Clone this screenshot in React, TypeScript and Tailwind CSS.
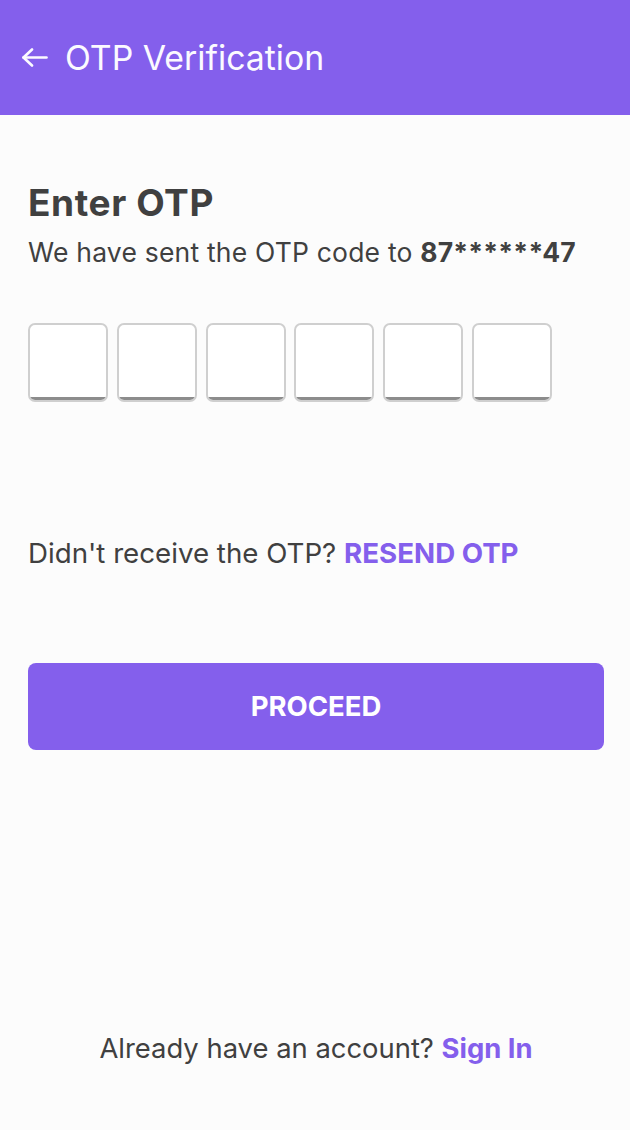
import React from "react";

export default function App() {
  const boxes = [0, 1, 2, 3, 4, 5];
  return (
    <div className="min-h-[1130px] w-[630px] bg-[#fcfcfc] flex flex-col">
      <header className="h-[115px] bg-[#845fec] flex items-center pl-[22px] text-[#fbfaff]">
        <svg width="26" height="19" viewBox="0 0 26 19" fill="none" className="shrink-0">
          <path d="M1.5 9.5H24.5" stroke="currentColor" strokeWidth="2.6" strokeLinecap="round" />
          <path d="M10 1.5L1.5 9.5L10 17.5" stroke="currentColor" strokeWidth="2.6" strokeLinecap="round" strokeLinejoin="round" />
        </svg>
        <h1 className="ml-[17px] font-['Inter',sans-serif] text-[33.8px] leading-[40px] font-normal">
          OTP Verification
        </h1>
      </header>

      <main className="flex flex-col pl-[28px] text-[#404040]">
        <h2 className="mt-[66px] font-['Inter',sans-serif] font-bold text-[37px] leading-[44px] tracking-[0.6px]">Enter OTP</h2>
        <p className="mt-[12px] font-['Inter',sans-serif] text-[26.5px] leading-[30px] tracking-[0.2px]">
          We have sent the OTP code to <span className="font-bold">87******47</span>
        </p>

        <div className="mt-[56px] flex gap-[8.8px]">
          {boxes.map((b) => (
            <div
              key={b}
              className="w-[80px] h-[79px] rounded-[7px] border-2 border-[#cfcfcf] bg-white overflow-hidden flex flex-col justify-end"
            >
              <div className="h-[3px] bg-[#8c8c8c]" />
            </div>
          ))}
        </div>

        <p className="mt-[135px] font-['Inter',sans-serif] text-[27.7px] leading-[32px]">
          Didn&apos;t receive the OTP?{" "}
          <span className="font-bold text-[#845fec]">RESEND OTP</span>
        </p>

        <button className="mt-[94px] h-[87px] w-[576px] rounded-[8px] bg-[#845fec] text-white font-['Inter',sans-serif] font-bold text-[27.5px] flex items-center justify-center">
          PROCEED
        </button>

        <p className="mt-[282px] w-[576px] text-center font-['Inter',sans-serif] text-[27.4px] leading-[32px]">
          Already have an account?{" "}
          <span className="font-bold text-[#845fec]">Sign In</span>
        </p>
      </main>
    </div>
  );
}
